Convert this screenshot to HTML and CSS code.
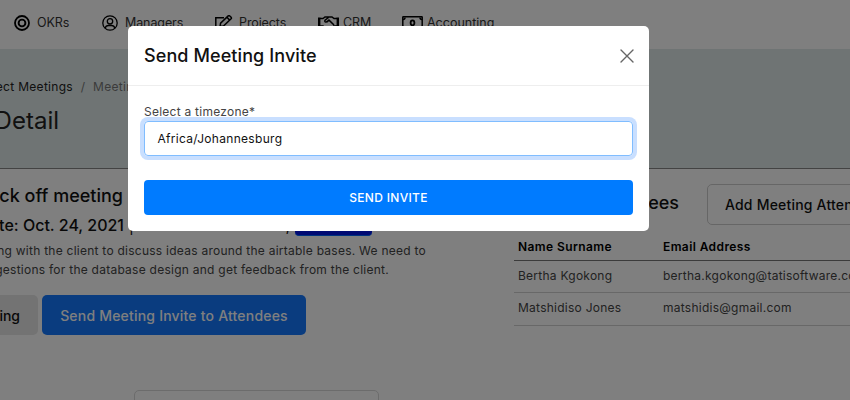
FILE: index.html
```
<!DOCTYPE html>
<html lang="en">
<head>
<meta charset="utf-8">
<title>Meeting Detail</title>
<link rel="stylesheet" href="styles.css">
</head>
<body>
<div class="page">
  <nav class="nav">
    <a class="nav-item okrs"><svg width="16" height="16" viewBox="0 0 16 16" fill="none" stroke="#000"><circle cx="8" cy="8" r="7" stroke-width="1.8"/><circle cx="8" cy="8" r="3.4" stroke-width="1.9"/></svg><span>OKRs</span></a>
    <a class="nav-item managers"><svg width="16" height="16" viewBox="0 0 16 16" fill="none" stroke="#000" stroke-width="1.3"><circle cx="8" cy="8" r="7.2"/><circle cx="8" cy="6.3" r="2.7"/><path d="M3.2 13.2c.5-2 1.8-2.7 3.3-2.7h3c1.5 0 2.8.7 3.3 2.7"/></svg><span>Managers</span></a>
    <a class="nav-item projects"><svg width="19" height="16" viewBox="0 0 19 16" fill="none" stroke="#000" stroke-width="1.5"><path d="M10 2.7H1.8V15h12.500v-4"/><path d="M6 11.500l.6-3.300L14.200.9q.8-.6 1.600.1l1.300 1.300q.7.800 0 1.500L9.500 11z M12.900 2.300l2.800 2.800"/></svg><span>Projects</span></a>
    <a class="nav-item crm"><svg width="21" height="16" viewBox="0 0 21 16" fill="none" stroke="#000" stroke-width="1.5"><path d="M1.200 2.500v9M19.800 2.500v9" stroke-width="2.400"/><path d="M2 3.500h3L7 2h7l2 1.500h3M2 11h3l4 3.500 3 .2 4-3.700h3M10.500 2.500L7 5.200q-.6 1.500.8 1.900 1 .2 3.200-2l5 4.900"/></svg><span>CRM</span></a>
    <a class="nav-item accounting"><svg width="21" height="16" viewBox="0 0 21 16" fill="none" stroke="#000" stroke-width="1.5"><rect x=".8" y="1.8" width="19.400" height="12.400" rx=".5"/><path d="M1 4.500q2 0 2-2M20 4.500q-2 0-2-2M1 11.500q2 0 2 2M20 11.500q-2 0-2 2"/><ellipse cx="10.500" cy="7.800" rx="1.900" ry="2.500" stroke-width="1.800"/></svg><span>Accounting</span></a>
  </nav>
  <header class="hero">
    <div class="crumbs"><span>Project Meetings</span><i>/</i><em>Meeting Detail</em></div>
    <h1>Meeting Detail</h1>
  </header>
  <main class="content">
    <section class="meeting">
      <h2>Kick off meeting</h2>
      <div class="date-row"><h3>Date: Oct. 24, 2021</h3><span class="sep">|</span><span class="comma">,</span><span class="tag"></span></div>
      <p class="line-one">Meeting with the client to discuss ideas around the airtable bases. We need to</p>
      <p class="line-two">get suggestions for the database design and get feedback from the client.</p>
      <div class="actions"><button class="btn grey">Edit Meeting</button><button class="btn blue">Send Meeting Invite to Attendees</button></div>
      <div class="empty-field"></div>
    </section>
    <section class="attendees">
      <div class="attendees-head"><h2>Attendees</h2><button class="btn outline">Add Meeting Attendees</button></div>
      <div class="row head"><span>Name Surname</span><span>Email Address</span></div>
      <div class="row"><span>Bertha Kgokong</span><span>bertha.kgokong@tatisoftware.com</span></div>
      <div class="row"><span>Matshidiso Jones</span><span>matshidis@gmail.com</span></div>
    </section>
  </main>
</div>
<div class="backdrop">
  <div class="modal">
    <div class="modal-head"><h4>Send Meeting Invite</h4><svg width="14" height="14" viewBox="0 0 14 14" stroke="#666" stroke-width="1.4" stroke-linecap="round"><path d="M1 1l12 12M13 1L1 13"/></svg></div>
    <div class="modal-body">
      <label>Select a timezone*</label>
      <div class="select">Africa/Johannesburg</div>
      <button class="submit">SEND INVITE</button>
    </div>
  </div>
</div>
</body>
</html>
```
FILE: styles.css
```
* { box-sizing: border-box; }
body { margin: 0; width: 850px; height: 400px; overflow: hidden; font-family: Inter, sans-serif; color: #000; }
h1, h2, h3, h4, p { margin: 0; font-weight: 500; white-space: nowrap; }
button { font-family: inherit; margin: 0; padding: 0; border: 0; white-space: nowrap; }
svg { display: block; flex: none; }
.page { width: 850px; height: 400px; overflow: hidden; background: #fff; }
.nav { height: 49px; padding: 0 0 4px 14px; display: flex; align-items: center; }
.nav-item { display: flex; align-items: center; gap: 7px; flex: none; font-size: 12.5px; letter-spacing: -.1px; font-weight: 400; color: #333; white-space: nowrap; }
.okrs { width: 88px; }
.managers { width: 112px; }
.projects { width: 104px; gap: 6px; }
.crm { width: 84px; gap: 4px; }
.accounting { gap: 4px; letter-spacing: 0; }
.hero { height: 120px; background: #dee8e8; border-bottom: 1px solid #868686; padding-top: 29px; }
.crumbs { display: flex; font-size: 12px; line-height: 17px; letter-spacing: .3px; white-space: nowrap; color: #222; }
.crumbs span { width: 73px; display: flex; justify-content: flex-end; flex: none; }
.crumbs i { font-style: normal; color: #777; width: 20px; text-align: center; flex: none; }
.crumbs em { font-style: normal; color: #777; }
.hero h1 { width: 59px; display: flex; justify-content: flex-end; font-size: 24px; line-height: 30px; margin-top: 11px; font-weight: 400; color: #222; }
.content { display: flex; }
.meeting { width: 514px; flex: none; padding-top: 14px; }
.meeting h2 { width: 123px; display: flex; justify-content: flex-end; font-size: 18px; line-height: 25px; color: #111; }
.date-row { display: flex; height: 28px; margin-top: 3px; align-items: center; color: #111; font-size: 16px; }
.date-row h3 { width: 124px; display: flex; justify-content: flex-end; font-size: 16px; flex: none; }
.sep { width: 10px; text-align: right; }
.comma { width: 156px; text-align: right; }
.tag { width: 77px; height: 25px; margin-left: 5px; background: #0014e6; border-radius: 4px; align-self: flex-start; border-bottom: 1px solid #0064ff; }
.meeting p { font-size: 12px; line-height: 19px; letter-spacing: .25px; font-weight: 400; color: #444; display: flex; justify-content: flex-end; }
.line-one { width: 426px; margin-top: 2px; }
.line-two { width: 389px; }
.actions { display: flex; gap: 4px; margin-top: 16px; height: 40px; }
.btn { height: 40px; border-radius: 5px; font-size: 14px; font-weight: 500; flex: none; }
.grey { width: 118px; margin-left: -80px; background: #e6e6e6; color: #111; padding-right: 18px; display: flex; justify-content: flex-end; align-items: center; }
.blue { width: 264px; background: #1478ff; color: #fff; letter-spacing: .2px; }
.empty-field { margin: 55px 0 0 134px; width: 245px; height: 40px; border: 1px solid #d8d8d8; border-radius: 5px; }
.attendees { width: 336px; flex: none; padding-top: 15px; }
.attendees-head { display: flex; gap: 28px; height: 41px; }
.attendees h2 { width: 165px; flex: none; display: flex; justify-content: flex-end; font-size: 18px; line-height: 38px; color: #111; }
.outline { width: 210px; height: 41px; background: #fff; border: 1px solid #ccc; color: #111; text-align: left; padding-left: 17px; letter-spacing: .2px; }
.row { display: grid; grid-template-columns: 145px 1fr; width: 345px; height: 32.4px; align-items: center; padding: 0 4px 3px; border-bottom: 1px solid #d0d0d0; font-size: 12px; letter-spacing: .25px; color: #444; white-space: nowrap; }
.row.head { height: 36px; padding-top: 8px; padding-bottom: 0; border-bottom: 1px solid #777; color: #000; font-weight: 600; letter-spacing: .4px; }
.backdrop { position: absolute; left: 0; top: 0; width: 850px; height: 400px; background: rgba(0, 0, 0, .5); padding: 26px 0 0 128px; }
.modal { width: 521px; height: 205px; background: #fff; border-radius: 5px; }
.modal-head { height: 60px; border-bottom: 1px solid #eee; display: flex; justify-content: space-between; align-items: center; padding: 0 15px 0 16px; }
.modal-head h4 { font-size: 18px; letter-spacing: .1px; color: #111; }
.modal-body { padding: 17px 16px 0; }
.modal-body label { display: block; font-size: 12px; line-height: 17px; letter-spacing: .25px; color: #444; }
.select { margin-top: 1px; height: 35px; border: 1px solid #80bdff; border-radius: 4px; box-shadow: 0 0 0 4px #c9dfff; padding-left: 12.5px; display: flex; align-items: center; font-size: 12px; letter-spacing: .3px; color: #111; }
.submit { display: block; width: 100%; height: 35px; margin-top: 24px; background: #007bff; border-radius: 4px; color: #fff; font-size: 12px; font-weight: 500; letter-spacing: .3px; }
```
